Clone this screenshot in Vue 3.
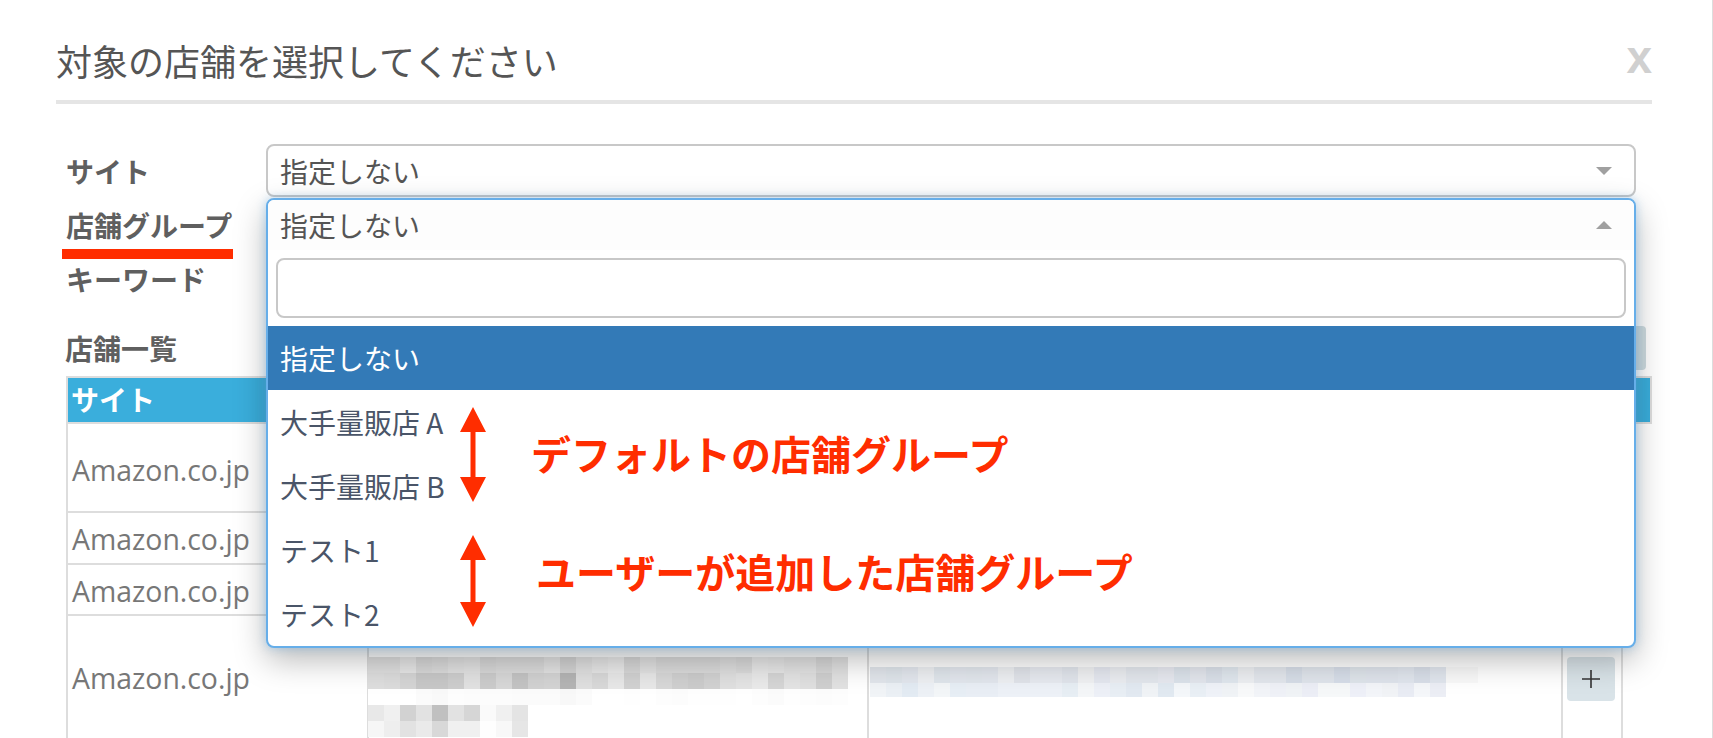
<template>
  <div class="modal">
    <header class="modal-head">
      <h2 class="modal-title">対象の店舗を選択してください</h2>
      <span class="close">x</span>
    </header>

    <div class="form">
      <div class="form-row">
        <label class="form-label">サイト</label>
        <div class="select">
          <span>指定しない</span>
          <i class="caret"></i>
        </div>
      </div>

      <div class="form-row">
        <label class="form-label">店舗グループ</label>
        <i class="underline"></i>
        <div class="control">
          <div class="dropdown">
            <div class="dropdown-head">
              <span>指定しない</span>
              <i class="caret caret-up"></i>
            </div>
            <div class="search-wrap">
              <input class="search" type="text">
            </div>
            <ul class="options">
              <li v-for="(opt, i) in options" :key="opt" class="option" :class="{ active: i === 0 }">{{ opt }}</li>
              <!-- 注釈 -->
              <li v-for="note in notes" :key="note.text" class="note" :class="note.cls">
                <svg class="arrow" width="26" :height="note.h" :viewBox="`0 0 26 ${note.h}`">
                  <path :d="`M13 0 L26 25 L15.500 25 L15.500 ${note.h - 25} L26 ${note.h - 25} L13 ${note.h} L0 ${note.h - 25} L10.500 ${note.h - 25} L10.500 25 L0 25 Z`" fill="#ff2d00" />
                </svg>
                <span class="note-text">{{ note.text }}</span>
              </li>
            </ul>
          </div>
        </div>
      </div>

      <div class="form-row">
        <label class="form-label">キーワード</label>
        <input class="keyword" type="text">
      </div>
    </div>

    <div class="list-head">
      <span class="list-title">店舗一覧</span>
      <button class="list-btn"></button>
    </div>

    <div class="table">
      <div class="table-head">サイト</div>
      <div v-for="row in rows" :key="row.h" class="table-row" :style="{ height: row.h + 'px' }">
        <div class="cell cell-site">Amazon.co.jp</div>
        <div class="cell cell-name">
          <template v-if="row.blur">
            <div v-for="(line, i) in blurLeft" :key="i" class="blur-line">
              <i v-for="(c, j) in line" :key="j" :style="{ background: '#' + c + c + c }"></i>
            </div>
          </template>
        </div>
        <div class="cell cell-desc">
          <template v-if="row.blur">
            <div v-for="(line, i) in blurRight" :key="i" class="blur-line" :class="'blur-r' + i">
              <i v-for="(c, j) in line" :key="j" :style="{ background: c }"></i>
            </div>
          </template>
        </div>
        <div class="cell cell-btn">
          <button v-if="row.blur" class="add-btn">
            <svg width="20" height="20" viewBox="0 0 20 20">
              <path d="M10 1V19M1 10H19" stroke="#333" stroke-width="1.600" />
            </svg>
          </button>
        </div>
      </div>
    </div>
  </div>
</template>

<script setup>
const options = ['指定しない', '大手量販店 A', '大手量販店 B', 'テスト1', 'テスト2']

const notes = [
  { text: 'デフォルトの店舗グループ', cls: 'note-a', h: 95 },
  { text: 'ユーザーが追加した店舗グループ', cls: 'note-b', h: 92 }
]

const rows = [
  { h: 89 },
  { h: 52 },
  { h: 51 },
  { h: 126, blur: true }
]

// ぼかし部分の色
const gray = (s) => s.split(',')
const blurLeft = [
  gray('e0,e0,e8,d9,dc,e2,e4,d9,dc,dc,dc,e4,d4,e2,e8,ec,d9,e4,dc,dc,dc,dc,e0,dc,ea,e8,e4,e4,d9,e2'),
  gray('de,dc,d5,c8,c8,ce,e2,cc,d8,c4,d2,d4,b5,e0,d9,e8,d2,e8,d8,d0,cc,d2,e0,e4,ea,d6,e4,e0,d0,e2'),
  gray('ff,ff,ff,fb,f9,fd,fc,fc,fc,fb,fb,fb,f8,fb,ff,ff,fe,ff,fd,fc,fe,fe,fe,ff,fd,fb,fe,fd,fc,fd'),
  gray('e8,f0,d2,e2,c0,e2,d6,fa,f0,e4'),
  gray('f6,ee,e2,ea,d8,f0,f0,fe,f8,e6')
]

const hex = (s) => s.split(',').map((c) => '#' + c)
const blurRight = [
  hex('e2e6ec,dfe5eb,e3e7ee,eef0f3,e0e6ec,e3e7ee,e2e7ed,e3e7ee,eef0f3,e1e4ea,e7eaf0,e7eaf0,e1e5ec,f0f1f3,e5e8f0,ebedf1,e3e7ed,e3e7ed,e7e9f0,dce3eb,e3e6ed,dae0e9,e0e7ee,edeff2,e3e7ed,e3e7ed,d7dee8,e0e5ec,e0e5ec,d7dee9,dfe5eb,dfe4ec,dfe4ec,e1e6ee,d9dfe9,e1e6ee,f9f9f9,f9f9f9'),
  hex('f1f4f7,ebf0f5,e3ebf3,edf1f6,f3f6f8,e7eef5,e9eef5,e9eef5,edf1f7,edf1f7,edf1f7,edf1f7,e7eef4,f4f6f8,edf0f7,e8eef4,e2e9f1,f0f3f6,e1e9f1,f4f7fa,e9eff5,eff2f8,f0f3f6,f8f9fa,f2f4f8,eff1f7,f0f3f6,eceef6,f6f8f9,f6f8f9,eef0f8,f3f5f9,f1f3f6,e9ecf4,f5f7fa,eceef5')
]
</script>

<style scoped>
.modal {
  width: 1713px;
  height: 738px;
  box-sizing: border-box;
  padding: 0 60px 0 56px;
  border-right: 1px solid #ddd;
  overflow: hidden;
  background: #fff;
  color: #555;
  font-family: "Noto Sans CJK JP", "Noto Sans", sans-serif;
}

.modal-head {
  display: flex;
  justify-content: space-between;
  align-items: center;
  height: 100px;
  border-bottom: 4px solid #e5e5e5;
  box-sizing: content-box;
}

.modal-title {
  margin: 0;
  padding-top: 20px;
  font-size: 36px;
  font-weight: 400;
  line-height: 74px;
  white-space: nowrap;
}

.close {
  padding-top: 14px;
  font-family: "Liberation Sans", sans-serif;
  font-size: 46px;
  font-weight: 700;
  line-height: 46px;
  color: #d0d0d0;
}

.form {
  margin: 40px 16px 0 10px;
}

.form-row {
  position: relative;
  display: flex;
  align-items: center;
  height: 54px;
}

.form-label {
  width: 200px;
  flex-shrink: 0;
  font-size: 28px;
  font-weight: 700;
  color: #5f5f5f;
  white-space: nowrap;
}

.underline {
  position: absolute;
  left: -4px;
  top: 51px;
  width: 171px;
  height: 10px;
  background: #ff2d00;
}

.select,
.keyword {
  flex: 1;
  box-sizing: border-box;
  height: 53px;
  align-self: flex-start;
}

.select {
  display: flex;
  justify-content: space-between;
  align-items: center;
  padding: 0 22px 0 12px;
  border: 2px solid #c8c8c8;
  border-radius: 8px;
  font-size: 28px;
}

.keyword {
  border: 2px solid #c8c8c8;
  border-radius: 8px;
}

.caret {
  width: 0;
  height: 0;
  border-left: 8px solid transparent;
  border-right: 8px solid transparent;
  border-top: 8px solid #a0a0a0;
}

.caret-up {
  border-top: 0;
  border-bottom: 8px solid #a0a0a0;
}

.control {
  flex: 1;
  position: relative;
  align-self: stretch;
}

.dropdown {
  position: absolute;
  z-index: 5;
  top: 0;
  left: 0;
  right: 0;
  box-sizing: border-box;
  height: 450px;
  border: 2px solid #66aee9;
  border-radius: 8px;
  background: #fff;
  box-shadow: 0 0 10px rgba(102, 175, 233, .45), 0 12px 32px rgba(0, 0, 0, .28);
}

.dropdown-head {
  display: flex;
  justify-content: space-between;
  align-items: center;
  height: 50px;
  padding: 0 22px 0 12px;
  border-radius: 6px 6px 0 0;
  background: #fdfdfd;
  font-size: 28px;
}

.search-wrap {
  padding: 8px;
}

.search {
  display: block;
  box-sizing: border-box;
  width: 100%;
  height: 60px;
  border: 2px solid #c8c8c8;
  border-radius: 8px;
  outline: none;
}

.options {
  position: relative;
  margin: 0;
  padding: 0;
  list-style: none;
}

.option {
  height: 64px;
  padding-left: 12px;
  font-size: 28px;
  line-height: 64px;
  color: #4a5568;
  white-space: nowrap;
}

.option.active {
  background: #337ab7;
  color: #fff;
}

.note {
  position: absolute;
  display: flex;
  align-items: center;
}

.note-a {
  left: 192px;
  top: 81px;
}

.note-b {
  left: 192px;
  top: 209px;
}

.arrow {
  flex-shrink: 0;
}

.note-text {
  font-size: 40px;
  font-weight: 700;
  line-height: 48px;
  color: #ff2d00;
  white-space: nowrap;
}

.note-a .note-text {
  margin-left: 45px;
  margin-top: -4px;
}

.note-b .note-text {
  margin-left: 50px;
  margin-top: -20px;
}

.list-head {
  display: flex;
  justify-content: space-between;
  align-items: center;
  height: 44px;
  margin: 20px 6px 6px 9px;
}

.list-title {
  font-size: 28px;
  font-weight: 700;
  color: #5f5f5f;
}

.list-btn {
  width: 120px;
  height: 44px;
  border: 0;
  border-radius: 4px;
  background: #cfdce0;
}

.table {
  margin-left: 10px;
}

.table-head {
  box-sizing: border-box;
  height: 48px;
  padding-left: 3px;
  border: 2px solid #ddd;
  background: #3aaedc;
  color: #fff;
  font-size: 28px;
  font-weight: 700;
  line-height: 42px;
}

.table-row {
  display: grid;
  grid-template-columns: 299px 500px 694px 62px;
  box-sizing: border-box;
  width: 1557px;
  border-bottom: 2px solid #ddd;
  border-left: 2px solid #ddd;
}

.table-row:first-of-type .cell-site,
.table-head + .table-row .cell-site {
  padding-top: 4px;
}

.cell {
  box-sizing: border-box;
  min-width: 0;
}

.cell + .cell {
  border-left: 2px solid #ddd;
}

.cell-site {
  display: flex;
  align-items: center;
  padding-left: 4px;
  font-family: "Open Sans", sans-serif;
  font-size: 28.400px;
  color: #777;
}

.cell-name {
  padding-top: 41px;
}

.cell-name .blur-line {
  margin-left: -1px;
}

.cell-desc {
  padding: 51px 0 0 1px;
}

.blur-line {
  display: flex;
  height: 16px;
}

.blur-line i {
  display: block;
  flex-shrink: 0;
  width: 16px;
  height: 100%;
}

.blur-r1 {
  height: 14px;
}

.cell-btn {
  padding: 41px 0 0 4px;
  border-right: 2px solid #ddd;
}

.add-btn {
  display: flex;
  align-items: center;
  justify-content: center;
  width: 48px;
  height: 44px;
  padding: 0;
  border: 0;
  border-radius: 4px;
  background: #d9e3e8;
}
</style>

<style>
html,
body {
  overflow: hidden;
  background: #fff;
}
</style>
